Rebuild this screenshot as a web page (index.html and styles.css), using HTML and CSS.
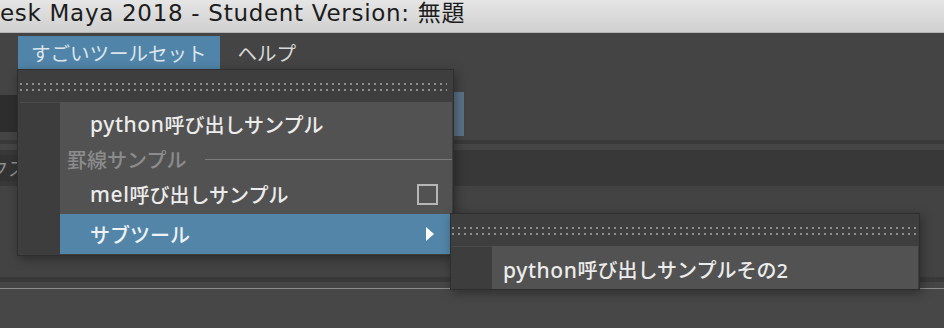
FILE: index.html
```html
<!DOCTYPE html>
<html lang="ja">
<head>
<meta charset="utf-8">
<title>Maya menu</title>
<link rel="stylesheet" href="styles.css">
</head>
<body>
<div class="titlebar"><span class="title">esk Maya 2018 - Student Version: 無題</span></div>
<div class="workspace">
  <div class="menubar">
    <div class="mb-item mb-active">すごいツールセット</div>
    <div class="mb-item">ヘルプ</div>
  </div>
  <div class="shelf">
    <div class="shelf-dark"></div>
    <div class="shelf-btn"></div>
  </div>
  <div class="stripe-dark"></div>
  <div class="stripe-mid"></div>
  <div class="tabband"><div class="tablabel"><span>ボックス</span></div></div>
  <div class="panel"></div>
  <div class="time-dark"></div>
  <div class="time-mid"></div>
  <div class="time-line"></div>
  <div class="bottom"></div>
</div>

<div class="menu main-menu">
  <div class="tearoff"><div class="dots"></div></div>
  <div class="menu-body">
    <div class="gutter"></div>
    <div class="items">
      <div class="item row-first"><span class="lat">python</span>呼び出しサンプル</div>
      <div class="separator"><span class="sep-label">罫線サンプル</span><span class="sep-line"></span></div>
      <div class="item"><span class="lat">mel</span>呼び出しサンプル<span class="checkbox"></span></div>
      <div class="item item-active">サブツール
        <svg class="arrow" width="8" height="14" viewBox="0 0 8 14"><polygon points="0,0 8,7 0,14" fill="#ffffff"/></svg>
      </div>
    </div>
  </div>
</div>

<div class="menu sub-menu">
  <div class="tearoff"><div class="dots"></div></div>
  <div class="menu-body sub-body">
    <div class="gutter"></div>
    <div class="items">
      <div class="item sub-item"><span class="lat">python</span>呼び出しサンプルその2</div>
    </div>
  </div>
</div>
</body>
</html>
```

FILE: styles.css
```css
* { box-sizing: border-box; }
html, body {
  margin: 0;
  padding: 0;
  width: 944px;
  height: 328px;
  overflow: hidden;
}
body {
  position: relative;
  background: #444444;
  font-family: "Noto Sans", "Noto Sans CJK JP", sans-serif;
  display: flex;
  flex-direction: column;
}

/* ---------- title bar ---------- */
.titlebar {
  height: 33px;
  flex: none;
  background: linear-gradient(#e5e5e5, #d0d0d0);
  border-bottom: 1px solid #b4b4b4;
  padding-bottom: 5px;
  white-space: nowrap;
  overflow: hidden;
}
.title {
  font-family: "DejaVu Sans", "Noto Sans CJK JP", sans-serif;
  font-size: 23px;
  line-height: 27px;
  letter-spacing: 0.7px;
  color: #1c1c1c;
}

/* ---------- workspace background ---------- */
.workspace {
  flex: 1;
  display: flex;
  flex-direction: column;
  background: #444444;
}
.menubar {
  height: 36px;
  padding: 3px 0 0 18px;
  display: flex;
  gap: 5px;
  flex: none;
}
.mb-item {
  height: 33px;
  padding: 0 13px;
  display: flex;
  align-items: center;
  font-size: 19.5px;
  color: #d8d8d8;
  white-space: nowrap;
}
.mb-active {
  background: #5084a8;
  color: #dde5ec;
}
.shelf {
  margin-top: 23px;
  height: 45px;
  display: flex;
  flex: none;
}
.shelf-dark {
  margin-top: 3px;
  width: 40px;
  height: 37px;
  background: #2d2d2d;
}
.shelf-btn {
  margin-left: 380px;
  width: 44px;
  height: 44px;
  background: #5b7286;
}
.stripe-dark {
  margin-top: 3px;
  height: 4px;
  background: #393939;
  flex: none;
}
.stripe-mid {
  height: 6px;
  background: #454545;
  flex: none;
}
.tabband {
  height: 36px;
  background: #383838;
  flex: none;
  display: flex;
  align-items: center;
}
.tablabel {
  width: 27px;
  height: 26px;
  overflow: hidden;
  display: flex;
  justify-content: flex-end;
  align-items: center;
  background: #333333;
  font-size: 19px;
  color: #8e8e8e;
  white-space: nowrap;
}
.tablabel span { flex: none; }
.panel {
  height: 91px;
  background: #434343;
  flex: none;
}
.time-dark {
  height: 5px;
  background: #393939;
  flex: none;
}
.time-mid {
  height: 6px;
  background: #454545;
  flex: none;
}
.time-line {
  height: 1px;
  background: #8c8c8c;
  flex: none;
}
.bottom {
  flex: 1;
  background: #474747;
}

/* ---------- menus (overlay) ---------- */
.menu {
  position: absolute;
  background: #3e3e3e;
  border: 1px solid #2e2e2e;
  box-shadow: 2px 3px 10px rgba(0, 0, 0, 0.35);
  display: flex;
  flex-direction: column;
}
.main-menu {
  left: 17px;
  top: 69px;
  width: 437px;
  height: 187px;
  padding-bottom: 1px;
}
.sub-menu {
  left: 450px;
  top: 213px;
  width: 470px;
  height: 77px;
}
.tearoff {
  height: 32px;
  flex: none;
  padding: 13px 6px 0 2px;
}
.sub-menu .tearoff { padding: 13px 1px 0 1px; }
.dots {
  height: 8px;
  background:
    linear-gradient(90deg, #8e8e8e 0 2px, transparent 2px 6px) 0 0 / 6px 2px repeat-x,
    linear-gradient(90deg, #8e8e8e 0 2px, transparent 2px 6px) 0 6px / 6px 2px repeat-x;
}
.menu-body {
  flex: 1;
  display: flex;
  margin: 0 1px 0 2px;
}
.sub-body { margin: 0 1px; }
.gutter {
  width: 40px;
  flex: none;
  background: #3d3d3d;
  border-top: 1px solid #4a4a4a;
}
.items {
  flex: 1;
  background: #525252;
  padding-top: 2px;
  display: flex;
  flex-direction: column;
}
.sub-body .items { padding-top: 0; }
.item {
  height: 40px;
  display: flex;
  align-items: center;
  padding-left: 30px;
  font-size: 20px;
  font-weight: 500;
  color: #ececec;
  white-space: nowrap;
}
.lat {
  font-size: 21px;
  letter-spacing: 0.6px;
}
.separator {
  height: 30px;
  display: flex;
  align-items: center;
  padding-left: 7px;
}
.sep-label {
  font-size: 20px;
  font-weight: 500;
  color: #8b8b8b;
  white-space: nowrap;
}
.sep-line {
  flex: 1;
  height: 1px;
  margin-left: 19px;
  background: #7a7a7a;
}
.checkbox {
  margin-left: auto;
  margin-right: 14px;
  width: 21px;
  height: 21px;
  border: 2px solid #b6b6b6;
}
.item-active {
  background: #5285a8;
  color: #eef2f5;
  margin-right: 2px;
}
.arrow {
  margin-left: auto;
  margin-right: 16px;
}
.sub-item {
  height: 43px;
  padding-left: 11px;
  padding-top: 4px;
}
```
